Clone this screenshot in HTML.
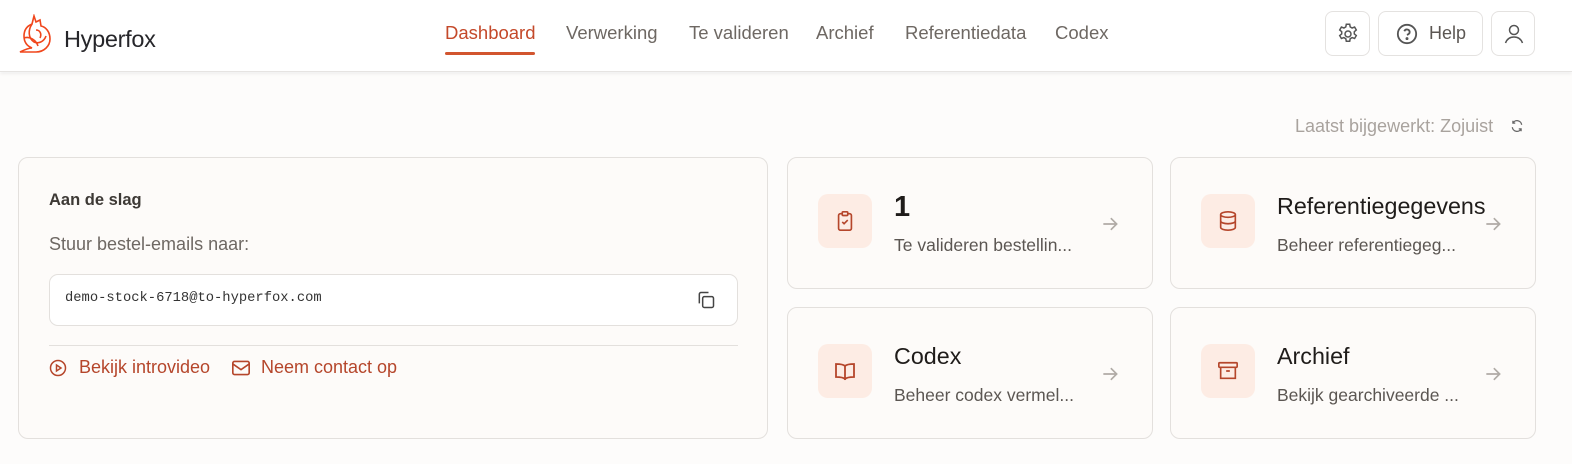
<!DOCTYPE html>
<html><head><meta charset="utf-8"><style>
*{box-sizing:border-box;margin:0;padding:0}
body{width:1572px;height:464px;background:#fff;font-family:"Liberation Sans",sans-serif;position:relative;overflow:hidden;color:#2a2623}
.hdr{position:absolute;left:0;top:0;width:1572px;height:72px;background:#fff;border-bottom:1px solid #e6e4e2;box-shadow:0 2px 3px rgba(0,0,0,.06)}
.logo{position:absolute;left:18px;top:14px}
.brand{position:absolute;left:64px;top:26px;font-size:23.5px;color:#26262a;letter-spacing:-0.3px}
.nav a{position:absolute;top:22px;font-size:18.5px;color:#6e6863;text-decoration:none}
.nav a.act{color:#c4492a}
.ul{position:absolute;left:445px;top:52px;width:90px;height:3px;border-radius:2px;background:#d2552f}
.btn{position:absolute;top:11px;height:45px;border:1px solid #e4e2e0;border-radius:8px;background:#fff}
.main{position:absolute;left:0;top:73px;width:1572px;height:391px;background:#fdfcfb}
.upd{position:absolute;left:1295px;top:116px;font-size:18px;color:#a9a39e}
.card{position:absolute;background:#fdfbf9;border:1px solid #e3e0dd;border-radius:10px}
.ib{position:absolute;left:30px;top:36px;width:54px;height:54px;border-radius:10px;background:#fdece4;display:flex;align-items:center;justify-content:center}
.t{position:absolute;left:106px;top:35px;font-size:23.3px;color:#1f1c1a}
.s{position:absolute;left:106px;top:77px;font-size:17.5px;color:#5b5652}
.ar{position:absolute;left:312px;top:56px}
.lnk{position:absolute;top:357px;font-size:18px;color:#b5462b}
</style></head><body>
<div class="main"></div>
<div class="hdr">
<svg class="logo" width="40" height="40" viewBox="0 0 40 40" fill="none" stroke="#f0461c" stroke-width="1.6"><path d="M16 2 L18 8 L22 6 L23 12 C28 13 32 18 32 25 C32 32 26 38 18 38 L2 38 C6 36 10 34 14 34 C9 32 6 28 6 22 C6 16 9 12 14 10 Z"/><path d="M14 10 C10 16 10 24 16 28 C20 30 26 28 28 22"/><path d="M6 24 C12 22 18 26 20 32"/><path d="M18 16 C22 16 24 20 22 24"/></svg>
<div class="brand">Hyperfox</div>
<div class="nav">
<a class="act" style="left:445px">Dashboard</a>
<a style="left:566px">Verwerking</a>
<a style="left:689px">Te valideren</a>
<a style="left:816px">Archief</a>
<a style="left:905px">Referentiedata</a>
<a style="left:1055px">Codex</a>
</div>
<div class="ul"></div>
<div class="btn" style="left:1325px;width:45px"><svg style="position:absolute;left:10px;top:10px" width="24" height="24" viewBox="0 0 24 24" fill="none" stroke="#555" stroke-width="1.5"><path d="M10.3 2.3h3.4l.5 2.6 1.9 1.1 2.5-.9 1.7 2.9-2 1.7v2.2l2 1.7-1.7 2.9-2.5-.9-1.9 1.1-.5 2.6h-3.4l-.5-2.6-1.9-1.1-2.5.9-1.7-2.9 2-1.7v-2.2l-2-1.7 1.7-2.9 2.5.9 1.9-1.1z"/><circle cx="12" cy="12" r="3"/></svg></div>
<div class="btn" style="left:1378px;width:105px"><svg style="position:absolute;left:17px;top:11px" width="22" height="22" viewBox="0 0 24 24" fill="none" stroke="#555" stroke-width="2"><circle cx="12" cy="12" r="10"/><path d="M9.1 9a3 3 0 0 1 5.8 1c0 2-3 3-3 3"/><circle cx="12" cy="17" r=".6" fill="#555"/></svg><span style="position:absolute;left:50px;top:11px;font-size:18px;color:#5b5652">Help</span></div>
<div class="btn" style="left:1491px;width:44px"><svg style="position:absolute;left:10px;top:10px" width="24" height="24" viewBox="0 0 24 24" fill="none" stroke="#555" stroke-width="1.5"><circle cx="12" cy="8" r="4.5"/><path d="M3.5 21c1.5-4 4.5-6 8.5-6s7 2 8.5 6"/></svg></div>
</div>
<div class="upd">Laatst bijgewerkt: Zojuist</div>
<svg style="position:absolute;left:1510px;top:119px" width="14" height="14" viewBox="0 0 24 24" fill="none" stroke="#666" stroke-width="2.2"><path d="M20 10a8 8 0 0 0-15-3M4 14a8 8 0 0 0 15 3"/><path d="M5 3v4h4M19 21v-4h-4"/></svg>

<div class="card" style="left:18px;top:157px;width:750px;height:282px">
<div style="position:absolute;left:30px;top:33px;font-size:16.5px;font-weight:bold;color:#3d3935">Aan de slag</div>
<div style="position:absolute;left:30px;top:76px;font-size:18px;color:#6e6863">Stuur bestel-emails naar:</div>
<div style="position:absolute;left:30px;top:116px;width:689px;height:52px;border:1px solid #e3e0dd;border-radius:9px;background:#fff">
<span style="position:absolute;left:15px;top:16px;font-family:'Liberation Mono',monospace;font-size:13.8px;color:#333">demo-stock-6718@to-hyperfox.com</span>
<svg style="position:absolute;left:646px;top:15px" width="20" height="20" viewBox="0 0 24 24" fill="none" stroke="#444" stroke-width="1.8"><rect x="8" y="8" width="13" height="13" rx="2"/><path d="M4 16V5a2 2 0 0 1 2-2h9"/></svg>
</div>
<div style="position:absolute;left:30px;top:187px;width:689px;height:1px;background:#e3e0dd"></div>
</div>
<svg style="position:absolute;left:49px;top:359px" width="18" height="18" viewBox="0 0 24 24" fill="none" stroke="#b5462b" stroke-width="2"><circle cx="12" cy="12" r="10"/><path d="M10 8l6 4-6 4z"/></svg>
<div class="lnk" style="left:79px">Bekijk introvideo</div>
<svg style="position:absolute;left:231px;top:359px" width="20" height="18" viewBox="0 0 24 22" fill="none" stroke="#b5462b" stroke-width="2"><rect x="2" y="3" width="20" height="16" rx="2"/><path d="M2 6l10 7 10-7"/></svg>
<div class="lnk" style="left:261px">Neem contact op</div>

<div class="card" style="left:787px;top:157px;width:366px;height:132px">
<div class="ib"><svg width="22" height="22" viewBox="0 0 24 24" fill="none" stroke="#b5462b" stroke-width="1.8"><rect x="5" y="4" width="14" height="18" rx="2"/><rect x="9" y="2" width="6" height="4" rx="1" fill="#fdece4"/><path d="M9 13l2 2 4-4"/></svg></div>
<div class="t" style="font-weight:bold;font-size:29px;top:33px">1</div>
<div class="s">Te valideren bestellin...</div>
<svg class="ar" width="20" height="20" viewBox="0 0 24 24" fill="none" stroke="#b0aba6" stroke-width="2"><path d="M4 12h16M13 5l7 7-7 7"/></svg>
</div>
<div class="card" style="left:787px;top:307px;width:366px;height:132px">
<div class="ib"><svg width="24" height="24" viewBox="0 0 24 24" fill="none" stroke="#b5462b" stroke-width="1.8"><path d="M12 7C10 5 6 5 3 5v13c3 0 7 0 9 2 2-2 6-2 9-2V5c-3 0-7 0-9 2zM12 7v14"/></svg></div>
<div class="t">Codex</div>
<div class="s">Beheer codex vermel...</div>
<svg class="ar" width="20" height="20" viewBox="0 0 24 24" fill="none" stroke="#b0aba6" stroke-width="2"><path d="M4 12h16M13 5l7 7-7 7"/></svg>
</div>
<div class="card" style="left:1170px;top:157px;width:366px;height:132px">
<div class="ib"><svg width="22" height="22" viewBox="0 0 24 24" fill="none" stroke="#b5462b" stroke-width="1.8"><ellipse cx="12" cy="5" rx="8" ry="3"/><path d="M4 5v14c0 1.7 3.6 3 8 3s8-1.3 8-3V5M4 12c0 1.7 3.6 3 8 3s8-1.3 8-3"/></svg></div>
<div class="t">Referentiegegevens</div>
<div class="s">Beheer referentiegeg...</div>
<svg class="ar" width="20" height="20" viewBox="0 0 24 24" fill="none" stroke="#b0aba6" stroke-width="2"><path d="M4 12h16M13 5l7 7-7 7"/></svg>
</div>
<div class="card" style="left:1170px;top:307px;width:366px;height:132px">
<div class="ib"><svg width="22" height="22" viewBox="0 0 24 24" fill="none" stroke="#b5462b" stroke-width="1.8"><rect x="2" y="3" width="20" height="5" rx="1"/><path d="M4 8v12h16V8M10 12h4"/></svg></div>
<div class="t">Archief</div>
<div class="s">Bekijk gearchiveerde ...</div>
<svg class="ar" width="20" height="20" viewBox="0 0 24 24" fill="none" stroke="#b0aba6" stroke-width="2"><path d="M4 12h16M13 5l7 7-7 7"/></svg>
</div>
</body></html>
